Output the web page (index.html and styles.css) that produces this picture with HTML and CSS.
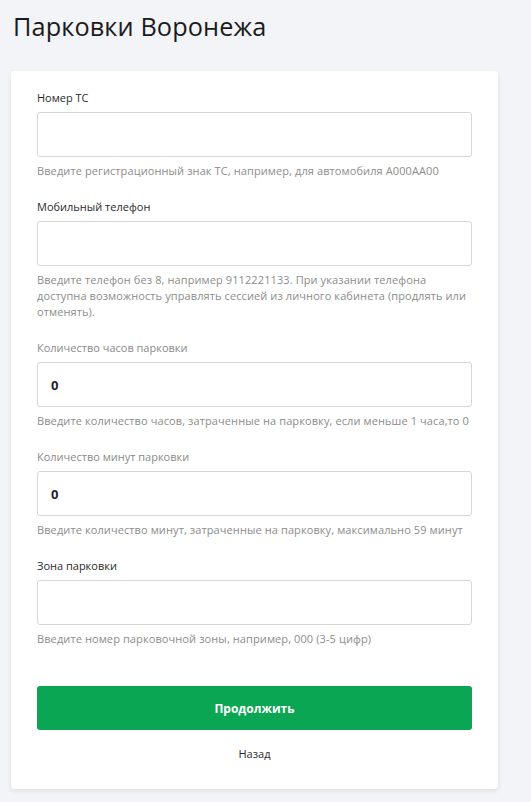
FILE: index.html
```html
<!DOCTYPE html>
<html lang="ru">
<head>
<meta charset="utf-8">
<title>Парковки Воронежа</title>
<link rel="stylesheet" href="styles.css">
</head>
<body>
<main class="page">
  <h1 class="title">Парковки Воронежа</h1>
  <form class="card">
    <div class="field">
      <label class="label">Номер ТС</label>
      <input class="input" type="text">
      <p class="hint">Введите регистрационный знак ТС, например, для автомобиля А000АА00</p>
    </div>
    <div class="field">
      <label class="label">Мобильный телефон</label>
      <input class="input" type="text">
      <p class="hint">Введите телефон без 8, например 9112221133. При указании телефона доступна возможность управлять сессией из личного кабинета (продлять или отменять).</p>
    </div>
    <div class="field">
      <label class="label label-muted">Количество часов парковки</label>
      <input class="input" type="text" value="0">
      <p class="hint">Введите количество часов, затраченные на парковку, если меньше 1 часа,то 0</p>
    </div>
    <div class="field">
      <label class="label label-muted">Количество минут парковки</label>
      <input class="input" type="text" value="0">
      <p class="hint">Введите количество минут, затраченные на парковку, максимально 59 минут</p>
    </div>
    <div class="field">
      <label class="label">Зона парковки</label>
      <input class="input" type="text">
      <p class="hint">Введите номер парковочной зоны, например, 000 (3-5 цифр)</p>
    </div>
    <button class="btn" type="button">Продолжить</button>
    <a class="back" href="#">Назад</a>
  </form>
</main>
</body>
</html>
```
FILE: styles.css
```css
html, body {
  margin: 0;
  padding: 0;
  background: #f3f4f7;
  font-family: "Open Sans", "Noto Sans", sans-serif;
  color: #222;
}
.page {
  padding: 10px 33px 12px 11px;
}
.title {
  margin: 0 0 0 2px;
  font-family: "Open Sans", sans-serif;
  font-weight: 500;
  font-size: 25.3px;
  line-height: 32px;
  color: #1b1b1b;
  letter-spacing: 0.1px;
}
.card {
  margin-top: 29px;
  background: #fff;
  border-radius: 4px;
  box-shadow: 0 2px 5px rgba(20, 30, 60, 0.09);
  padding: 18px 26px 26px 26px;
  display: flex;
  flex-direction: column;
}
.field {
  display: flex;
  flex-direction: column;
  margin-bottom: 19px;
}
.field:last-of-type {
  margin-bottom: 18px;
}
.label {
  font-size: 11px;
  line-height: 18px;
  color: #2b2b2b;
  margin-bottom: 5px;
}
.label-muted {
  color: #8a8a8a;
}
.input {
  box-sizing: border-box;
  height: 45px;
  border: 1px solid #d6d6d6;
  border-radius: 3px;
  padding: 0 13px;
  font-family: "Open Sans", sans-serif;
  font-size: 13px;
  font-weight: 700;
  color: #1f1f1f;
  background: #fff;
  outline: none;
}
.hint {
  margin: 6px 0 0 0;
  font-size: 11px;
  letter-spacing: 0.1px;
  line-height: 16px;
  color: #8c8c8c;
}
.btn {
  margin-top: 21px;
  height: 44px;
  border: none;
  border-radius: 3px;
  background: #0aa653;
  color: #fff;
  font-family: "Open Sans", sans-serif;
  font-weight: 700;
  font-size: 12px;
}
.back {
  align-self: center;
  margin-top: 15px;
  font-size: 11px;
  line-height: 18px;
  color: #2b2b2b;
  text-decoration: none;
}
```
